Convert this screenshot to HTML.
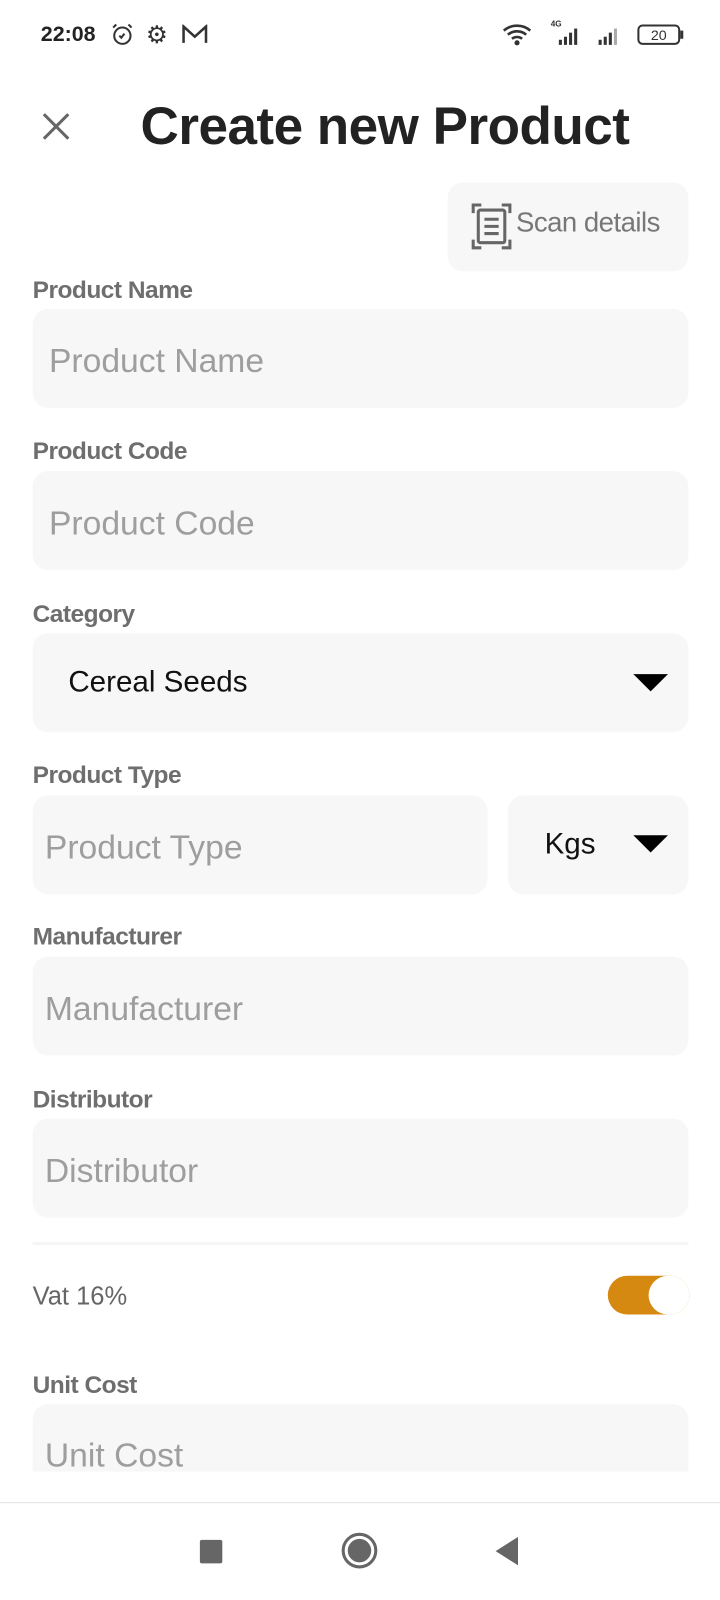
<!DOCTYPE html>
<html><head><meta charset="utf-8"><style>
*{margin:0;padding:0;box-sizing:border-box}
body{width:720px;height:1600px;background:#fff;font-family:"Liberation Sans",sans-serif;position:relative;overflow:hidden}
#w{position:absolute;left:0;top:0;width:706px;height:1569px;transform:scale(1.0198);transform-origin:0 0}
.a{position:absolute}
.lbl{position:absolute;left:32px;font-size:24px;font-weight:bold;color:#6e6e6e;letter-spacing:-0.5px}
.f{position:absolute;background:#f7f7f7;border-radius:15px;height:97px}
.ph{position:absolute;font-size:33px;color:#9e9e9e}
.tri{position:absolute;width:0;height:0;border-left:17px solid transparent;border-right:17px solid transparent;border-top:17px solid #000}
</style></head><body><div id="w">
<div class="a" style="left:40px;top:22px;font-size:21px;font-weight:bold;color:#222">22:08</div>
<svg class="a" style="left:108px;top:22px" width="24" height="24" viewBox="0 0 24 24"><circle cx="12" cy="13" r="8" fill="none" stroke="#333" stroke-width="2"/><path d="M9 13l2 2 3-4M3 5l3-3M21 5l-3-3" stroke="#333" stroke-width="2" fill="none"/></svg>
<div class="a" style="left:143px;top:20px;font-size:24px;color:#333">⚙</div>
<svg class="a" style="left:178px;top:24px" width="26" height="20" viewBox="0 0 26 20"><path d="M2 18V2l11 10L24 2v16" stroke="#333" stroke-width="2.5" fill="none"/></svg>
<svg class="a" style="left:492px;top:22px" width="32" height="24" viewBox="0 0 32 24"><path d="M2 8a20 20 0 0 1 26 0M6 12a14 14 0 0 1 18 0M10 16a8 8 0 0 1 10 0" stroke="#333" stroke-width="2.5" fill="none"/><circle cx="15" cy="20" r="2.5" fill="#333"/></svg>
<div class="a" style="left:540px;top:19px;font-size:8px;color:#333;font-weight:bold">4G</div>
<svg class="a" style="left:540px;top:25px" width="38" height="20"><rect x="8" y="14" width="3" height="5" fill="#333"/><rect x="13" y="11" width="3" height="8" fill="#333"/><rect x="18" y="7" width="3" height="12" fill="#333"/><rect x="23" y="3" width="3" height="16" fill="#333"/></svg>
<svg class="a" style="left:585px;top:25px" width="30" height="20"><rect x="2" y="14" width="3" height="5" fill="#333"/><rect x="7" y="11" width="3" height="8" fill="#333"/><rect x="12" y="7" width="3" height="12" fill="#333"/><rect x="17" y="3" width="3" height="16" fill="#aaa"/></svg>
<div class="a" style="left:625px;top:24px;width:42px;height:20px;border:2px solid #333;border-radius:5px;font-size:14px;text-align:center;line-height:16px;color:#333">20</div>
<div class="a" style="left:667px;top:30px;width:3px;height:8px;background:#333"></div>
<svg class="a" style="left:40px;top:109px" width="30" height="30"><path d="M3 3L27 27M27 3L3 27" stroke="#666" stroke-width="3"/></svg>
<div class="a" style="left:0;width:755px;text-align:center;top:94px;font-size:52px;font-weight:bold;color:#222;letter-spacing:-0.5px">Create new Product</div>
<div class="a" style="left:439px;top:179px;width:236px;height:87px;background:#f7f7f7;border-radius:15px"></div>
<svg class="a" style="left:462px;top:199px" width="40" height="46" viewBox="0 0 40 46"><path d="M2 10V2h8M30 2h8v8M38 36v8h-8M10 44H2v-8" stroke="#666" stroke-width="3" fill="none"/><rect x="7" y="7" width="26" height="32" rx="2" fill="none" stroke="#666" stroke-width="3"/><path d="M13 16h14M13 23h14M13 30h14" stroke="#666" stroke-width="3"/></svg>
<div class="a" style="left:506px;top:203px;font-size:27px;color:#777;letter-spacing:-0.5px">Scan details</div>

<div class="lbl" style="top:271px">Product Name</div>
<div class="f" style="left:32px;top:303px;width:643px"></div>
<div class="ph" style="left:48px;top:335px">Product Name</div>

<div class="lbl" style="top:429px">Product Code</div>
<div class="f" style="left:32px;top:462px;width:643px"></div>
<div class="ph" style="left:48px;top:494px">Product Code</div>

<div class="lbl" style="top:589px">Category</div>
<div class="f" style="left:32px;top:621px;width:643px"></div>
<div class="a" style="left:67px;top:653px;font-size:29px;color:#111">Cereal Seeds</div>
<div class="tri" style="left:621px;top:661px"></div>

<div class="lbl" style="top:747px">Product Type</div>
<div class="f" style="left:32px;top:780px;width:446px"></div>
<div class="ph" style="left:44px;top:812px">Product Type</div>
<div class="f" style="left:498px;top:780px;width:177px"></div>
<div class="a" style="left:534px;top:812px;font-size:29px;color:#111">Kgs</div>
<div class="tri" style="left:621px;top:819px"></div>

<div class="lbl" style="top:905px">Manufacturer</div>
<div class="f" style="left:32px;top:938px;width:643px"></div>
<div class="ph" style="left:44px;top:970px">Manufacturer</div>

<div class="lbl" style="top:1065px">Distributor</div>
<div class="f" style="left:32px;top:1097px;width:643px"></div>
<div class="ph" style="left:44px;top:1129px">Distributor</div>

<div class="a" style="left:32px;top:1218px;width:643px;height:3px;background:#f5f5f5"></div>
<div class="a" style="left:32px;top:1257px;font-size:25px;color:#666">Vat 16%</div>
<div class="a" style="left:596px;top:1251px;width:80px;height:38px;border-radius:19px;background:#d68910"></div>
<div class="a" style="left:636px;top:1251px;width:40px;height:38px;border-radius:19px;background:#fff"></div>

<div class="lbl" style="top:1345px">Unit Cost</div>
<div class="a" style="left:32px;top:1377px;width:643px;height:66px;background:#f7f7f7;border-radius:15px 15px 0 0"></div>
<div class="ph" style="left:44px;top:1408px;height:34px;overflow:hidden">Unit Cost</div>

<div class="a" style="left:0;top:1473px;width:720px;height:1px;background:#e0e0e0"></div>
<div class="a" style="left:196px;top:1510px;width:22px;height:23px;background:#666;border-radius:2px"></div>
<div class="a" style="left:335px;top:1503px;width:35px;height:35px;border-radius:50%;border:3px solid #666"></div>
<div class="a" style="left:341px;top:1509px;width:23px;height:23px;border-radius:50%;background:#666"></div>
<svg class="a" style="left:484px;top:1506px" width="24" height="30"><path d="M24 1V29L2 15Z" fill="#666"/></svg>
</div></body></html>
